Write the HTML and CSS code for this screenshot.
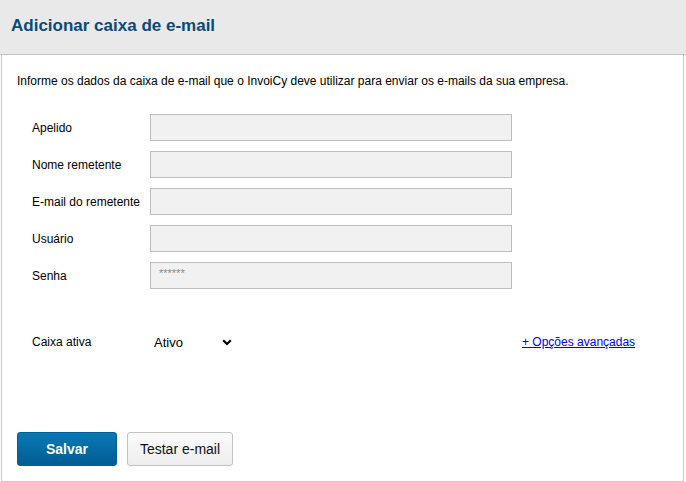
FILE: index.html
```html
<!DOCTYPE html>
<html lang="pt-BR">
<head>
<meta charset="utf-8">
<title>Adicionar caixa de e-mail</title>
<link rel="stylesheet" href="styles.css">
</head>
<body>
<div class="dialog">
  <header class="dialog-header">
    <h1 class="dialog-title">Adicionar caixa de e-mail</h1>
  </header>
  <main class="dialog-body">
    <p class="intro">Informe os dados da caixa de e-mail que o InvoiCy deve utilizar para enviar os e-mails da sua empresa.</p>
    <div class="form">
      <label class="row"><span class="label">Apelido</span><input class="field" type="text"></label>
      <label class="row"><span class="label">Nome remetente</span><input class="field" type="text"></label>
      <label class="row"><span class="label">E-mail do remetente</span><input class="field" type="text"></label>
      <label class="row"><span class="label">Usuário</span><input class="field" type="text"></label>
      <label class="row"><span class="label">Senha</span><input class="field" type="text" placeholder="******"></label>
    </div>
    <div class="status-row">
      <span class="label">Caixa ativa</span>
      <div class="select">
        <span class="select-value">Ativo</span>
        <svg class="chevron" width="10" height="7" viewBox="0 0 10 7"><path d="M1.2 1.3 L5 5 L8.8 1.3" fill="none" stroke="#000" stroke-width="2.2"/></svg>
      </div>
      <a class="advanced" href="#">+ Opções avançadas</a>
    </div>
    <div class="actions">
      <button class="btn btn-primary" type="button">Salvar</button>
      <button class="btn btn-secondary" type="button">Testar e-mail</button>
    </div>
  </main>
</div>
</body>
</html>
```
FILE: styles.css
```css
html, body {
  margin: 0;
  padding: 0;
  background: #fff;
}
body {
  font-family: "Liberation Sans", Arial, sans-serif;
  color: #000;
  width: 686px;
  height: 482px;
  overflow: hidden;
}
.dialog {
  width: 686px;
}
.dialog-header {
  height: 54px;
  background: #e9e9e9;
  border-bottom: 1px solid #c4c4c4;
  display: flex;
  align-items: center;
  padding-left: 11px;
  box-sizing: content-box;
}
.dialog-title {
  margin: 0;
  font-size: 17px;
  font-weight: bold;
  color: #0a4a7a;
  position: relative;
  top: -1px;
}
.dialog-body {
  margin: 0 2px 0 1px;
  height: 427px;
  border: 1px solid #c8c8c8;
  border-top: none;
  box-sizing: border-box;
  padding: 19px 0 0 15px;
  display: flex;
  flex-direction: column;
}
.intro {
  margin: 0;
  font-size: 12px;
  line-height: 14px;
}
.form {
  margin-top: 26px;
  padding-left: 15px;
  display: flex;
  flex-direction: column;
  gap: 10px;
}
.row {
  display: flex;
  align-items: center;
}
.label {
  width: 118px;
  font-size: 12px;
  flex: none;
}
.field {
  width: 362px;
  height: 27px;
  box-sizing: border-box;
  margin: 0;
  border: 1px solid #bdbdbd;
  background: #f1f1f1;
  font-family: "Liberation Sans", Arial, sans-serif;
  font-size: 11px;
  padding: 0 8px 6px;
  outline: none;
}
.field::placeholder {
  color: #8a8a8a;
}
.status-row {
  margin-top: 43px;
  padding-left: 15px;
  display: flex;
  align-items: center;
  height: 20px;
}
.select {
  width: 80px;
  display: flex;
  align-items: center;
  padding-left: 4px;
  font-size: 13px;
}
.chevron {
  margin-left: auto;
  margin-right: 2px;
  margin-top: 1px;
}
.advanced {
  margin-left: 288px;
  font-size: 12px;
  color: #0000ee;
  text-decoration: underline;
}
.actions {
  margin-top: 80px;
  display: flex;
  gap: 10px;
}
.btn {
  height: 34px;
  box-sizing: border-box;
  border-radius: 3px;
  font-family: "Liberation Sans", Arial, sans-serif;
  font-size: 14px;
  cursor: pointer;
}
.btn-primary {
  width: 100px;
  border: 1px solid #005e94;
  background: linear-gradient(#0a79b6, #005c92);
  color: #fff;
  font-weight: bold;
}
.btn-secondary {
  width: 106px;
  border: 1px solid #c3c3c3;
  background: linear-gradient(#fafafa, #eeeeee);
  color: #111;
}
```
